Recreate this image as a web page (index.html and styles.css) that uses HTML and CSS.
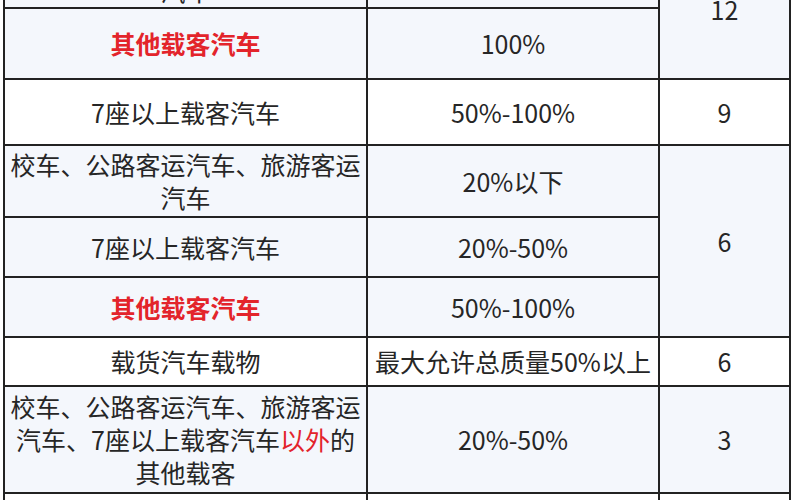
FILE: index.html
```html
<!DOCTYPE html>
<html lang="zh-CN">
<head>
<meta charset="utf-8">
<title>超员扣分</title>
<link rel="stylesheet" href="styles.css">
</head>
<body>
<table class="sheet">
  <colgroup>
    <col class="c1">
    <col class="c2">
    <col class="c3">
  </colgroup>
  <tbody>
    <tr class="blue r0">
      <td>校车、公路客运汽车、旅游客运汽车</td>
      <td>20%以上</td>
      <td rowspan="2">12</td>
    </tr>
    <tr class="blue r1">
      <td class="red">其他载客汽车</td>
      <td>100%</td>
    </tr>
    <tr class="white r2">
      <td>7座以上载客汽车</td>
      <td>50%-100%</td>
      <td>9</td>
    </tr>
    <tr class="blue r3">
      <td>校车、公路客运汽车、旅游客运汽车</td>
      <td>20%以下</td>
      <td rowspan="3">6</td>
    </tr>
    <tr class="blue r4">
      <td>7座以上载客汽车</td>
      <td>20%-50%</td>
    </tr>
    <tr class="blue r5">
      <td class="red">其他载客汽车</td>
      <td>50%-100%</td>
    </tr>
    <tr class="white r6">
      <td>载货汽车载物</td>
      <td>最大允许总质量50%以上</td>
      <td>6</td>
    </tr>
    <tr class="blue r7">
      <td>校车、公路客运汽车、旅游客运汽车、7座以上载客汽车<span class="red-thin">以外</span>的其他载客</td>
      <td>20%-50%</td>
      <td>3</td>
    </tr>
    <tr class="white r8">
      <td>载货汽车载物</td>
      <td>最大允许总质量30%以上未达到50%</td>
      <td>3</td>
    </tr>
  </tbody>
</table>
</body>
</html>
```
FILE: styles.css
```css
html, body {
  margin: 0;
  padding: 0;
  background: #ffffff;
  overflow: hidden;
}
body {
  width: 800px;
  height: 500px;
  font-family: "Noto Sans CJK SC", "Microsoft YaHei", sans-serif;
  font-size: 25px;
  line-height: 33px;
  color: #262626;
}
.sheet {
  border-collapse: collapse;
  table-layout: fixed;
  width: 786px;
  margin-left: 3px;
  margin-top: -61px;
}
.c1 { width: 363px; }
.c2 { width: 292px; }
.c3 { width: 131px; }
.sheet td {
  border: 2px solid #222;
  padding: 0 4px;
  text-align: center;
  vertical-align: middle;
  overflow: hidden;
}
.blue td { background: #f4f7fc; }
.white td { background: #ffffff; }
.r0 td { height: 58px; }
.r1 td { height: 69px; }
.r2 td { height: 64px; }
.r3 td { height: 70px; }
.r4 td { height: 58px; }
.r5 td { height: 58px; }
.r6 td { height: 47px; }
.r7 td { height: 105px; }
.r8 td { height: 78px; }
.red {
  color: #e3242b;
  font-weight: bold;
}
.red-thin {
  color: #e3242b;
}
```
